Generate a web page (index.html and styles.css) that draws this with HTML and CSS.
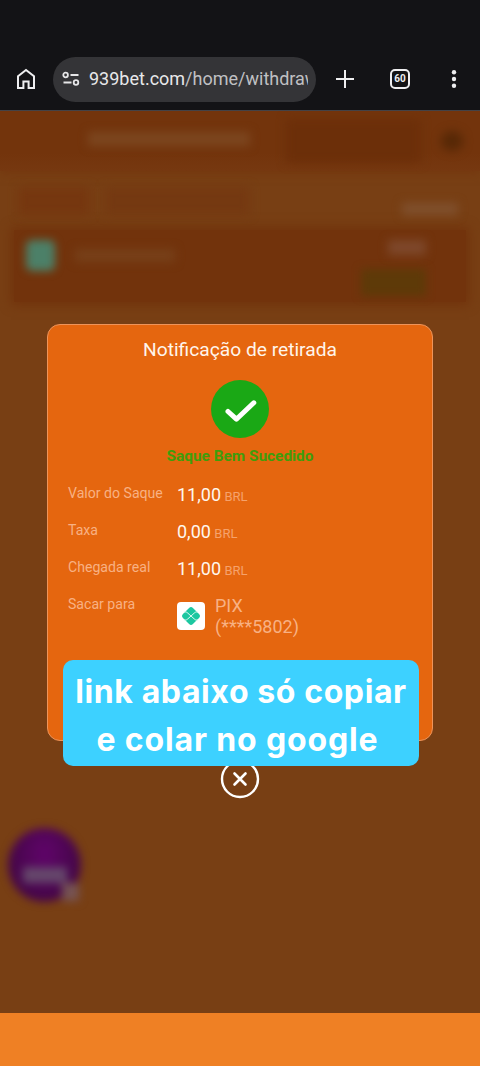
FILE: index.html
```html
<!DOCTYPE html>
<html lang="pt-BR">
<head>
<meta charset="utf-8">
<meta name="viewport" content="width=device-width, initial-scale=1">
<title>Notificação de retirada</title>
<link rel="stylesheet" href="styles.css">
</head>
<body>
<header class="browser-bar">
  <svg class="home" width="20" height="22" viewBox="0 0 20 22"><path d="M2 8.200 10 2l8 6.200V20h-5.400v-6.500H7.400V20H2Z" fill="none" stroke="#eeeef0" stroke-width="2"/></svg>
  <div class="address">
    <svg class="tune" width="18" height="16" viewBox="0 0 18 16" fill="none" stroke="#e6e6e8" stroke-width="1.800"><circle cx="3.600" cy="4" r="2.300"/><path d="M8.500 4H16.500M1.500 11.500h8"/><circle cx="14" cy="11.500" r="2.300"/></svg>
    <span class="url">939bet.com<span class="path">/home/withdraw</span></span>
  </div>
  <svg class="plus" width="18" height="18" viewBox="0 0 18 18"><path d="M9 0v18M0 9h18" stroke="#eeeef0" stroke-width="2"/></svg>
  <span class="tabs">60</span>
  <svg class="more" width="6" height="18" viewBox="0 0 6 18" fill="#eeeef0"><circle cx="3" cy="2.300" r="2.200"/><circle cx="3" cy="9" r="2.200"/><circle cx="3" cy="15.700" r="2.200"/></svg>
</header>
<main class="page">
  <div class="backdrop">
    <div class="back-head"><i class="smear heading"></i><i class="smear tab"></i><i class="smear dot"></i></div>
    <div class="back-filter"><i class="smear select"></i><i class="smear select-two"></i><i class="smear total"></i></div>
    <div class="back-card">
      <i class="smear logo"></i><i class="smear label"></i>
      <div class="back-values"><i class="smear amount"></i><i class="smear status"></i></div>
    </div>
    <div class="mascot"><i class="mascot-eyes"></i><i class="mascot-hand"></i></div>
  </div>
  <section class="dialog">
    <h1>Notificação de retirada</h1>
    <svg class="check" width="58" height="58" viewBox="0 0 58 58"><circle cx="29" cy="29" r="29" fill="#1aa815"/><path d="m17 31.500 8.400 7.700 17.400-16.400" fill="none" stroke="#fff" stroke-width="5" stroke-linecap="round" stroke-linejoin="round"/></svg>
    <p class="success">Saque Bem Sucedido</p>
    <dl class="details">
      <dt>Valor do Saque</dt><dd>11,00 <small>BRL</small></dd>
      <dt>Taxa</dt><dd>0,00 <small>BRL</small></dd>
      <dt>Chegada real</dt><dd>11,00 <small>BRL</small></dd>
      <dt>Sacar para</dt>
      <dd class="account">
        <span class="pix"><svg width="22" height="22" viewBox="0 0 20 20"><rect x="3.600" y="3.600" width="12.800" height="12.800" rx="2.500" transform="rotate(45 10 10)" fill="#1cc7a0"/><path d="M3.500 6.300h1.300q1.300 0 2.200 1L10 10l3-2.700q.9-1 2.200-1h1.300M3.500 13.700h1.300q1.300 0 2.200-1L10 10l3 2.700q.9 1 2.200 1h1.300" fill="none" stroke="#dffaf3" stroke-width=".9"/></svg></span>
        <span class="account-name">PIX<br>(****5802)</span>
      </dd>
    </dl>
  </section>
  <svg class="close" width="40" height="40" viewBox="0 0 40 40" fill="none" stroke="#fff"><circle cx="20" cy="20" r="18" stroke-width="2.400"/><path d="m14.500 14.500 11 11m0-11-11 11" stroke-width="2.600" stroke-linecap="round"/></svg>
  <p class="caption"><span class="line-one">link abaixo só copiar</span><span class="line-two">e colar no google</span></p>
</main>
<footer class="bottom-bar"></footer>
</body>
</html>
```

FILE: styles.css
```css
* { box-sizing: border-box; }
body {
  margin: 0;
  height: 1066px;
  display: flex;
  flex-direction: column;
  overflow: hidden;
  background: #783f14;
  font-family: Roboto, "Liberation Sans", sans-serif;
}
svg { display: block; flex: none; }
.browser-bar {
  height: 111px;
  flex: none;
  display: flex;
  align-items: center;
  padding: 48px 23px 0 16px;
  background: #131316;
  border-bottom: 1px solid #444246;
}
.address {
  width: 263px;
  height: 45px;
  margin-left: 17px;
  padding: 0 8px 0 9px;
  display: flex;
  align-items: center;
  gap: 9px;
  border-radius: 23px;
  background: #343437;
}
.url {
  flex: 1;
  overflow: hidden;
  white-space: nowrap;
  color: #e8e8ea;
  font-size: 18px;
  line-height: 26px;
}
.path { color: #c0c0c3; }
.plus { margin-left: 20px; }
.tabs {
  width: 20px;
  height: 20px;
  margin-left: 36px;
  display: grid;
  place-items: center;
  border: 2px solid #eeeef0;
  border-radius: 5px;
  color: #eeeef0;
  font-size: 10px;
  font-weight: 700;
  line-height: 1;
}
.more { margin-left: auto; }
.page {
  flex: 1;
  position: relative;
  display: flex;
  flex-direction: column;
  align-items: center;
  padding-top: 213px;
}
.backdrop {
  position: absolute;
  inset: 0;
  overflow: hidden;
}
.smear { display: block; filter: blur(5px); }
.back-head {
  height: 60px;
  display: flex;
  align-items: center;
  padding: 0 10px 0 88px;
  background: linear-gradient(#73340c 70%, #763810);
  box-shadow: 0 0 10px #73340c;
}
.heading { width: 162px; height: 14px; margin-bottom: 4px; background: #7c461f; }
.tab { width: 135px; height: 44px; margin-left: 36px; background: #6c2f09; }
.dot { width: 22px; height: 20px; margin-left: 20px; border-radius: 50%; background: #572806; }
.back-filter {
  height: 59px;
  display: flex;
  align-items: center;
  padding: 0 22px 0 18px;
}
.select { width: 72px; height: 28px; background: #76370f; }
.select-two { width: 145px; height: 28px; margin-left: 15px; background: #753911; }
.total { width: 56px; height: 12px; margin: 16px 0 0 auto; background: #80502d; }
.back-card {
  height: 72px;
  margin: 0 14px;
  padding: 10px 40px 0 12px;
  display: flex;
  align-items: flex-start;
  background: #72330c;
  box-shadow: 0 0 10px 3px #72330c;
}
.logo { width: 29px; height: 31px; border-radius: 6px; background: #4c8068; filter: blur(4px); }
.label { width: 100px; height: 13px; margin: 9px 0 0 20px; background: #774019; }
.back-values {
  margin-left: auto;
  display: flex;
  flex-direction: column;
  align-items: flex-end;
  gap: 14px;
}
.amount { width: 38px; height: 15px; background: #7e482b; }
.status { width: 65px; height: 27px; background: #5e3a08; filter: blur(4px); }
/* The mascot's face sits in its lower half. */
.mascot {
  width: 73px;
  height: 74px;
  margin: 526px 0 0 8px;
  padding-top: 39px;
  border-radius: 50%;
  background: radial-gradient(ellipse at 50% 35%, #60046a, #46064a 65%);
  filter: blur(4.500px);
}
.mascot-eyes {
  display: block;
  width: 44px;
  height: 16px;
  margin: 0 auto;
  background: #65466b;
}
.mascot-hand {
  display: block;
  width: 17px;
  height: 18px;
  margin-left: 54px;
  background: #765353;
}
.dialog {
  position: relative;
  width: 386px;
  height: 417px;
  padding: 14px 19px 0;
  display: flex;
  flex-direction: column;
  align-items: center;
  border: 1px solid #ee945a;
  border-radius: 13px;
  background: #e5660f;
}
h1 {
  margin: 0;
  color: #fff5eb;
  font-size: 19.200px;
  font-weight: 400;
  line-height: 22px;
}
.check { margin-top: 19px; }
.success {
  margin: 8px 0 0;
  color: #3f9d0b;
  font-size: 15.400px;
  font-weight: 700;
  line-height: 20px;
}
.details {
  align-self: stretch;
  display: grid;
  grid-template-columns: 109px 1fr;
  grid-template-rows: repeat(3, 37px) auto;
  margin: 17.500px 0 0;
  padding-left: 1px;
}
dt { color: #f8b183; font-size: 14.100px; line-height: 18px; }
dd { margin: 0; color: #fff7ee; font-size: 18px; line-height: 22px; }
small { margin-left: -1px; color: #f5a26c; font-size: 13px; }
.account {
  display: flex;
  align-items: center;
  gap: 10px;
  color: #f8b183;
  line-height: 21px;
}
.pix {
  width: 28px;
  height: 28px;
  display: grid;
  place-items: center;
  border-radius: 4px;
  background: #fff;
}
.close { position: relative; margin-top: 18px; }
.caption {
  position: absolute;
  top: 549px;
  left: 63px;
  width: 356px;
  height: 106px;
  margin: 0;
  padding-top: 8px;
  display: flex;
  flex-direction: column;
  align-items: center;
  border-radius: 10px;
  background: #3dd1ff;
  color: #fff;
  font-family: Inter, "Open Sans", sans-serif;
  font-size: 32px;
  font-weight: 700;
  line-height: 48px;
  white-space: nowrap;
}
.line-one { letter-spacing: .6px; }
.line-two { padding-right: 7px; letter-spacing: .85px; }
.bottom-bar { height: 53px; flex: none; background: #ef8024; }
```
